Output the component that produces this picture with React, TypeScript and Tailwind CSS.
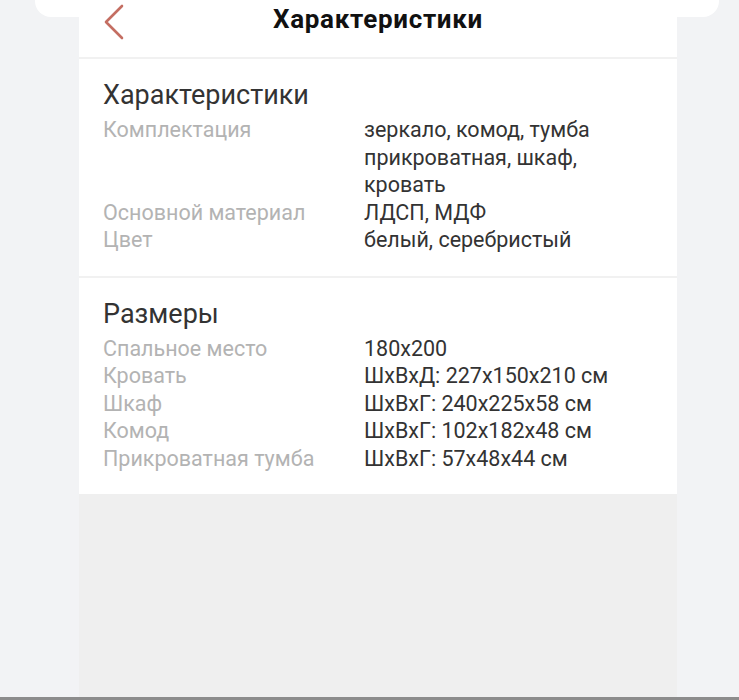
const specs = [
  { label: 'Комплектация', value: ['зеркало, комод, тумба', 'прикроватная, шкаф,', 'кровать'] },
  { label: 'Основной материал', value: ['ЛДСП, МДФ'] },
  { label: 'Цвет', value: ['белый, серебристый'] },
]

const sizes = [
  { label: 'Спальное место', value: ['180x200'] },
  { label: 'Кровать', value: ['ШxВxД: 227x150x210 см'] },
  { label: 'Шкаф', value: ['ШxВxГ: 240x225x58 см'] },
  { label: 'Комод', value: ['ШxВxГ: 102x182x48 см'] },
  { label: 'Прикроватная тумба', value: ['ШxВxГ: 57x48x44 см'] },
]

type Row = { label: string; value: string[] }

function Section({ title, rows }: { title: string; rows: Row[] }) {
  return (
    <section className="px-6 pt-[19px] pb-[22px]">
      <h2 className="text-[27px] leading-[34px] text-[#333] mb-[4px]">{title}</h2>
      <dl className="text-[21.5px] leading-[27.5px]">
        {rows.map((r) => (
          <div key={r.label} className="flex">
            <dt className="w-[261px] shrink-0 text-[#b3b3b3]">{r.label}</dt>
            <dd className="text-[#333]">
              {r.value.map((line) => (
                <div key={line}>{line}</div>
              ))}
            </dd>
          </div>
        ))}
      </dl>
    </section>
  )
}

export default function App() {
  return (
    <div className="relative h-[700px] bg-[#f2f3f5] font-['Roboto',sans-serif] overflow-hidden">
      <div className="absolute left-[35px] right-[20px] top-0 h-[17px] rounded-b-[16px] bg-white" />
      <div className="ml-[79px] flex h-[697px] w-[598px] flex-col bg-[#efefef]">
        <header className="relative flex h-[59px] justify-center border-b-2 border-[#f1f1f1] bg-white pt-[4px]">
          <svg
            viewBox="0 0 20 36"
            className="absolute left-[25px] top-[4px] h-[36px] w-[20px]"
            fill="none"
            stroke="#c46e62"
            strokeWidth="2.6"
            strokeLinecap="round"
            strokeLinejoin="round"
          >
            <path d="M18 2 L2 18 L18 34" />
          </svg>
          <h1 className="text-[26px] leading-[30px] tracking-[0.7px] font-bold text-[#111]">Характеристики</h1>
        </header>
        <div className="bg-white">
          <Section title="Характеристики" rows={specs} />
          <div className="h-[2px] bg-[#f1f1f1]" />
          <Section title="Размеры" rows={sizes} />
        </div>
      </div>
      <div className="h-[3px] bg-[#8c8c8c]" />
    </div>
  )
}
